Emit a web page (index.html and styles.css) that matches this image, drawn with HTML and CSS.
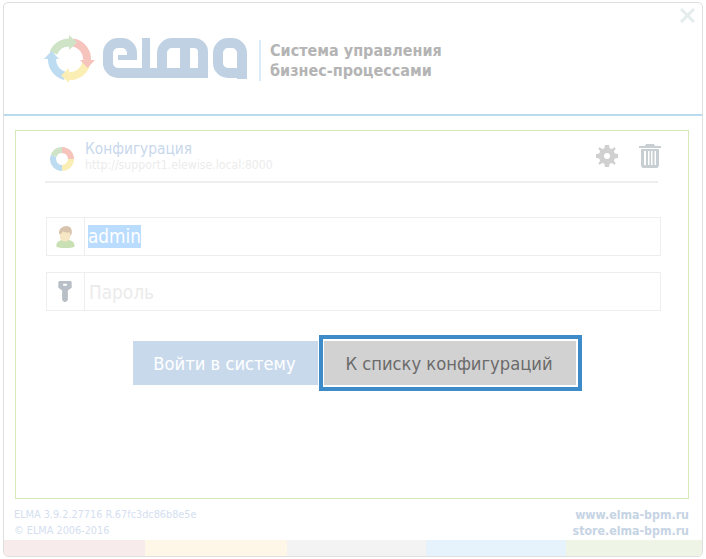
FILE: index.html
```html
<html>
  <head>
    <title>ELMA</title>
    <link rel="stylesheet" href="styles.css">
  </head>
  <body>
    <div class="window">
      <header class="top">
        <svg class="logo" width="204" height="49" viewBox="0 0 204 49">
          <g fill="none" stroke-width="8">
            <path d="M9.500 18A17 17 0 0 1 25 7.500" stroke="#cfe3c6"/>
            <path d="M29 7.500A17 17 0 0 1 43 25" stroke="#f6c4bd"/>
            <path d="M42.500 28A17 17 0 0 1 25 41" stroke="#fbeeb4"/>
            <path d="M21 41A17 17 0 0 1 8 24" stroke="#bedcf1"/>
          </g>
          <path d="M25 0V15L33 7.500Z" fill="#cfe3c6"/>
          <path d="M36 25H51L43.500 33Z" fill="#f6c4bd"/>
          <path d="M25 33V48L17 40.500Z" fill="#fbeeb4"/>
          <path d="M0 24H15L7.500 16Z" fill="#bedcf1"/>
          <g fill="none" stroke="#bfd1e2" stroke-width="10">
            <path d="M64 30V18A10 10 0 0 1 74 8H78A10 10 0 0 1 88 18V24"/>
            <path d="M64 28A10 10 0 0 0 74 38H154"/>
            <path d="M118 33V18A10 10 0 0 1 128 8H150A9 9 0 0 1 159 17V43"/>
            <path d="M141 8V33"/>
            <path d="M198 44V18A10 10 0 0 0 188 8H184A10 10 0 0 0 174 18V28A10 10 0 0 0 184 38H203"/>
          </g>
          <path d="M102 3V34" fill="none" stroke="#bfd1e2" stroke-width="8"/>
          <path d="M74 22.500H93" fill="none" stroke="#bfd1e2" stroke-width="5"/>
        </svg>
        <div class="slogan"><div class="slogan-text">Система управления<br>бизнес-процессами</div></div>
        <svg class="close" width="15" height="15" viewBox="0 0 15 15">
          <path d="M1 1L14 14M14 1L1 14" stroke="#e4ecec" stroke-width="3"/>
        </svg>
      </header>

      <main class="panel">
        <div class="config">
          <svg class="config-icon" width="24" height="24" viewBox="0 0 24 24" fill="none" stroke-width="6">
            <path d="M3.600 9A9 9 0 0 1 12 3" stroke="#cfe3c6"/>
            <path d="M12 3A9 9 0 0 1 21 12" stroke="#f6c4bd"/>
            <path d="M21 12A9 9 0 0 1 12 21" stroke="#fbeeb4"/>
            <path d="M12 21A9 9 0 0 1 3.600 9" stroke="#bedcf1"/>
          </svg>
          <div class="config-text">
            <div class="config-name">Конфигурация</div>
            <div class="config-url">http://support1.elewise.local:8000</div>
          </div>
          <svg class="gear" width="22" height="22" viewBox="0 0 22 22">
            <path fill="#d0d0d0" fill-rule="evenodd" d="M9 0H13L13.600 3.200L15.800 4.100L18.400 2.300L19.700 3.600L17.900 6.200L18.800 8.400L22 9V13L18.800 13.600L17.900 15.800L19.700 18.400L18.400 19.700L15.800 17.900L13.600 18.800L13 22H9L8.400 18.800L6.200 17.900L3.600 19.700L2.300 18.400L4.100 15.800L3.200 13.600L0 13V9L3.200 8.400L4.100 6.200L2.300 3.600L3.600 2.300L6.200 4.100L8.400 3.200ZM11 8A3 3 0 1 0 11 14A3 3 0 1 0 11 8Z"/>
          </svg>
          <svg class="trash" width="22" height="24" viewBox="0 0 22 24">
            <path fill="#c8cfd3" d="M7 0H15L16 2H22V4H0V2H6Z"/>
            <path fill="#c8cfd3" fill-rule="evenodd" d="M2 5H20V22L18.500 24H3.500L2 22ZM5 7V21H7V7ZM9 7V21H10.500V7ZM12 7V21H13.500V7ZM15.500 7V21H17V7Z"/>
          </svg>
        </div>

        <div class="field">
          <span class="field-icon">
            <svg width="19" height="22" viewBox="0 0 20 24">
              <path fill="#c9e0b4" d="M0 22C0 17 4 16 7 15H13C16 16 20 17 20 22C20 23 16 24 10 24C4 24 0 23 0 22Z"/>
              <path fill="#f6e6c4" d="M4 6H15V12C15 15 12 17 9.500 17C7 17 4 15 4 12Z"/>
              <path fill="#d8c4ac" d="M3 9C2 3 7 0 11 0C15 0 17 3 17 7C17 9 15 11 15 11V7C12 7.500 8 6.500 7 6C6 8 5 9 3 9Z"/>
            </svg>
          </span>
          <span class="field-value"><span class="selected">admin</span></span>
        </div>
        <div class="field">
          <span class="field-icon field-icon-key">
            <svg width="14" height="21" viewBox="0 0 14 22">
              <path fill="#b9bfc6" fill-rule="evenodd" d="M0 1L1 0H13L14 1V7L10 10V20L8 22H6L4 20V10L0 7ZM5 3V5H9V3Z"/>
            </svg>
          </span>
          <span class="field-value placeholder">Пароль</span>
        </div>

        <div class="actions">
          <button class="btn btn-login">Войти в систему</button>
          <button class="btn btn-list">К списку конфигураций</button>
        </div>
      </main>

      <div class="info">
        <div class="version">ELMA 3.9.2.27716 R.67fc3dc86b8e5e<br>© ELMA 2006-2016</div>
        <div class="links">www.elma-bpm.ru<br>store.elma-bpm.ru</div>
      </div>

      <div class="stripes">
        <span class="stripe-red"></span>
        <span class="stripe-yellow"></span>
        <span class="stripe-grey"></span>
        <span class="stripe-blue"></span>
        <span class="stripe-green"></span>
      </div>
    </div>
  </body>
</html>
```

FILE: styles.css
```css
html,
body {
  padding: 0;
  margin: 0;
  background: #fff;
  font-family: "DejaVu Sans Condensed", "DejaVu Sans", sans-serif;
}

.window {
  box-sizing: border-box;
  width: 700px;
  height: 555px;
  margin: 2px 0 0 3px;
  border: 1px solid #dfdfdf;
  border-radius: 5px;
  display: flex;
  flex-direction: column;
  overflow: hidden;
}

.top {
  box-sizing: border-box;
  height: 113px;
  flex-shrink: 0;
  display: flex;
  align-items: center;
  padding: 2px 0 0 40px;
  border-bottom: 2px solid #b9dbee;
  position: relative;
}

.slogan {
  box-sizing: border-box;
  height: 41px;
  margin: 2px 0 0 11px;
  padding-left: 9px;
  border-left: 2px solid #d9ebf6;
  font-size: 16px;
  font-weight: bold;
  line-height: 20px;
  color: #b4b4b4;
}

.slogan-text {
  margin-top: 1px;
}

.close {
  position: absolute;
  top: 5px;
  right: 7px;
}

.panel {
  box-sizing: border-box;
  height: 369px;
  margin: 14px 13px 0 11px;
  padding: 0 30px 0 29px;
  border: 1px solid #d6e9b8;
  flex-shrink: 0;
}

.config {
  box-sizing: border-box;
  height: 52px;
  display: flex;
  align-items: center;
  padding-left: 5px;
  border-bottom: 2px solid #eee;
  margin-bottom: 34px;
}

.config-icon {
  margin-top: 5px;
}

.config-text {
  margin-left: 11px;
  flex: 1;
}

.config-name {
  font-size: 15.300px;
  line-height: 19px;
  color: #c8d8ec;
}

.config-url {
  font-size: 12.200px;
  line-height: 13px;
  color: #ececec;
}

.gear {
  margin-right: 21px;
}

.trash {
  margin-right: -3px;
}

.field {
  box-sizing: border-box;
  height: 39px;
  margin: 0 -3px 16px 1px;
  display: flex;
  border: 1px solid #eee;
}

.field-icon {
  width: 37px;
  flex-shrink: 0;
  border-right: 1px solid #eee;
  display: flex;
  align-items: center;
  justify-content: center;
}

.field-icon-key {
  padding-right: 2px;
  box-sizing: border-box;
  width: 38px;
}

.field-value {
  display: flex;
  align-items: center;
  padding-left: 3px;
  font-size: 18.800px;
  color: #fff;
}

.selected {
  height: 23px;
  line-height: 23px;
  background: #b9dcff;
}

.placeholder {
  padding: 2px 0 0 4px;
  color: #ebebeb;
}

.actions {
  display: flex;
  align-items: center;
  margin-top: 28px;
  padding-left: 88px;
}

.btn {
  border: none;
  outline: none;
  height: 44px;
  padding: 0 2px 0 0;
  font-family: "DejaVu Sans Condensed", "DejaVu Sans", sans-serif;
  font-size: 18.200px;
}

.btn-login {
  box-sizing: border-box;
  width: 185px;
  background: #c9d9ec;
  color: #fff;
}

.btn-list {
  box-sizing: content-box;
  width: 250px;
  margin-left: 5px;
  background: #d2d2d2;
  color: #6b6b6b;
  border: 2px solid #fff;
  border-left-width: 1px;
  outline: 4px solid #3d8bc8;
}

.info {
  flex: 1;
  display: flex;
  justify-content: space-between;
  padding: 8px 13px 0 10px;
  line-height: 16px;
}

.version {
  font-size: 10.800px;
  color: #d4e0f0;
}

.links {
  font-size: 12.300px;
  font-weight: bold;
  text-align: right;
  color: #c6d4e4;
}

.stripes {
  height: 16px;
  display: flex;
  flex-shrink: 0;
}

.stripe-red {
  width: 141px;
  background: #f7eceb;
}

.stripe-yellow {
  width: 142px;
  background: #fef7e8;
}

.stripe-grey {
  width: 139px;
  background: #f3f3f3;
}

.stripe-blue {
  width: 140px;
  background: #e6f3fc;
}

.stripe-green {
  flex: 1;
  background: #eff5e6;
}
```
